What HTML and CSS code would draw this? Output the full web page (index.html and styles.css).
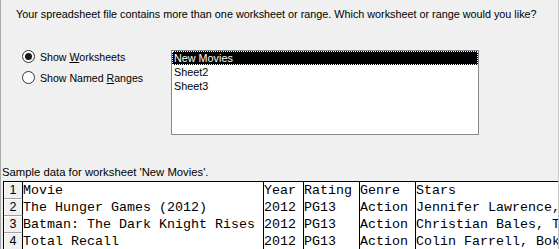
FILE: index.html
```html
<!DOCTYPE html>
<html lang="en">
  <head>
    <meta charset="UTF-8" />
    <title>Select Worksheet</title>
    <link rel="stylesheet" href="styles.css">
  </head>
  <body>
    <div class="dialog">
      <p class="prompt">Your spreadsheet file contains more than one worksheet or range. Which worksheet or range would you like?</p>

      <div class="choices">
        <div class="radios">
          <label class="radio checked"><span class="dot"></span><span>Show <u>W</u>orksheets</span></label>
          <label class="radio"><span class="dot"></span><span>Show Named <u>R</u>anges</span></label>
        </div>
        <ul class="listbox">
          <li class="selected">New Movies</li>
          <li>Sheet2</li>
          <li>Sheet3</li>
        </ul>
      </div>

      <p class="caption">Sample data for worksheet 'New Movies'.</p>

      <div class="grid">
        <div class="rownum">1</div>
        <div class="cell">Movie</div>
        <div class="cell">Year</div>
        <div class="cell">Rating</div>
        <div class="cell">Genre</div>
        <div class="cell">Stars</div>

        <div class="rownum">2</div>
        <div class="cell">The Hunger Games (2012)</div>
        <div class="cell">2012</div>
        <div class="cell">PG13</div>
        <div class="cell">Action</div>
        <div class="cell">Jennifer Lawrence, Josh Hutcherson</div>

        <div class="rownum">3</div>
        <div class="cell">Batman: The Dark Knight Rises</div>
        <div class="cell">2012</div>
        <div class="cell">PG13</div>
        <div class="cell">Action</div>
        <div class="cell">Christian Bales, Tom Hardy</div>

        <div class="rownum">4</div>
        <div class="cell">Total Recall</div>
        <div class="cell">2012</div>
        <div class="cell">PG13</div>
        <div class="cell">Action</div>
        <div class="cell">Colin Farrell, Bokeem Woodbine</div>
      </div>
    </div>
  </body>
</html>
```

FILE: styles.css
```css
* {
  box-sizing: border-box;
}

html,
body {
  margin: 0;
  height: 100%;
  background: #f0f0f0;
}

.dialog {
  height: 249px;
  overflow: hidden;
  border-left: 1px solid #a8a8a8;
  border-right: 1px solid #c8c8c8;
  width: 559px;
  font-family: "Liberation Sans", Arial, sans-serif;
  font-size: 11px;
  color: #000;
}

.prompt {
  margin: 7px 0 0 15px;
  font-size: 10.8px;
  line-height: 14px;
  white-space: nowrap;
}

.choices {
  display: flex;
  margin-top: 29px;
}

.radios {
  width: 170px;
  margin-top: -4px;
  padding-left: 21px;
}

.radio {
  display: flex;
  align-items: center;
  height: 21px;
  gap: 5px;
  font-size: 10.6px;
}

.dot {
  width: 13px;
  height: 13px;
  border: 1px solid #333;
  border-radius: 50%;
  background: #fff;
  display: flex;
  align-items: center;
  justify-content: center;
}

.checked .dot::after {
  content: "";
  width: 7px;
  height: 7px;
  border-radius: 50%;
  background: #1a1a1a;
}

.listbox {
  list-style: none;
  margin: 0;
  padding: 0;
  width: 308px;
  height: 85px;
  background: #fff;
  border: 1px solid #828790;
  font-size: 10.8px;
}

.listbox li {
  height: 14px;
  line-height: 14px;
  padding-left: 2px;
}

.listbox .selected {
  background: #000;
  color: #fff;
  outline: 1px dotted #fff;
  outline-offset: -1px;
}

.caption {
  margin: 30px 0 0 1px;
  line-height: 14px;
  font-size: 11.3px;
}

.grid {
  display: grid;
  grid-template-columns: 19px 241px 40px 56px 56px 200px;
  grid-auto-rows: 17px;
  margin: 2px 0 0 2px;
  border-top: 1px solid #000;
  border-left: 1px solid #000;
  width: 700px;
  font-family: "Liberation Mono", "Courier New", monospace;
  font-size: 13.33px;
}

.cell {
  background: #fff;
  border-right: 1px solid #000;
  line-height: 17px;
  white-space: nowrap;
  overflow: hidden;
}

.rownum {
  background: #f0f0f0;
  border-right: 1px solid #000;
  border-bottom: 1px solid #a0a0a0;
  box-shadow: inset 1px 1px 0 #fff;
  font-family: "Liberation Sans", Arial, sans-serif;
  font-size: 12.5px;
  text-align: center;
  line-height: 17px;
}
```
